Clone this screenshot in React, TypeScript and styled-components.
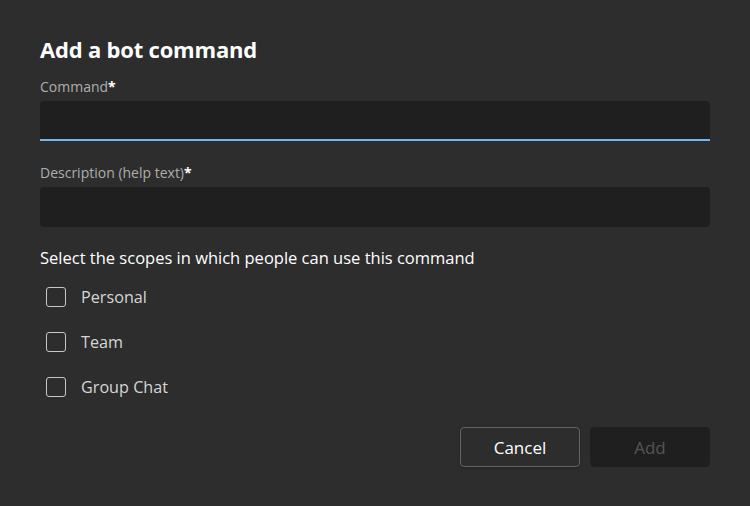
import React from "react";
import styled, { createGlobalStyle } from "styled-components";

const Global = createGlobalStyle`
  html, body { margin: 0; padding: 0; background: #2d2d2d; }
  body { font-family: "Segoe UI", "Open Sans", "Noto Sans", sans-serif; }
`;

const Dialog = styled.div`
  width: 750px;
  height: 506px;
  box-sizing: border-box;
  padding: 34px 40px 0 40px;
  background: #2d2d2d;
  display: flex;
  flex-direction: column;
`;

const Title = styled.h1`
  margin: 0;
  font-family: "Open Sans", sans-serif;
  font-weight: 700;
  font-size: 22px;
  line-height: 30px;
  color: #ffffff;
  letter-spacing: -0.2px;
`;

const Field = styled.div<{ $top: number }>`
  display: flex;
  flex-direction: column;
  margin-top: ${(p) => p.$top}px;
`;

const Label = styled.label`
  font-family: "Open Sans", sans-serif;
  font-size: 14px;
  line-height: 20px;
  color: #adadad;
  margin-bottom: 4px;
`;

const Star = styled.span`
  color: #ffffff;
  font-weight: 700;
`;

const Input = styled.div<{ $focused?: boolean }>`
  height: 40px;
  box-sizing: border-box;
  background: #1f1f1f;
  border-radius: 4px;
  border-bottom: 2px solid ${(p) => (p.$focused ? "#73b6ee" : "transparent")};
  ${(p) => (p.$focused ? "border-bottom-left-radius: 0; border-bottom-right-radius: 0;" : "")}
`;

const ScopeHeading = styled.div`
  margin-top: 20px;
  font-family: "Open Sans", sans-serif;
  font-size: 16.5px;
  line-height: 22px;
  color: #ffffff;
`;

const Options = styled.div`
  display: flex;
  flex-direction: column;
  gap: 25px;
  margin-top: 18px;
  padding-left: 6px;
`;

const Option = styled.div`
  display: flex;
  align-items: center;
  gap: 15px;
  height: 20px;
`;

const Box = styled.span`
  width: 20px;
  height: 20px;
  box-sizing: border-box;
  border: 1.5px solid #c8c8c8;
  border-radius: 3px;
`;

const OptionText = styled.span`
  font-family: "Open Sans", sans-serif;
  font-size: 16.2px;
  color: #d6d6d6;
`;

const Footer = styled.div`
  margin-top: 30px;
  display: flex;
  justify-content: flex-end;
  gap: 10px;
`;

const Button = styled.button<{ $disabled?: boolean }>`
  width: 120px;
  height: 40px;
  box-sizing: border-box;
  border-radius: 4px;
  font-family: "Open Sans", sans-serif;
  font-size: 17px;
  padding: 0;
  background: ${(p) => (p.$disabled ? "#1f1f1f" : "#2d2d2d")};
  color: ${(p) => (p.$disabled ? "#555555" : "#ffffff")};
  border: 1px solid ${(p) => (p.$disabled ? "#1f1f1f" : "#636363")};
  font-weight: ${(p) => (p.$disabled ? 400 : 500)};
  box-shadow: ${(p) => (p.$disabled ? "none" : "0 1px 3px rgba(0,0,0,0.25)")};
`;

export default function App() {
  return (
    <>
      <Global />
      <Dialog>
        <Title>Add a bot command</Title>
        <Field $top={13}>
          <Label>
            Command<Star>*</Star>
          </Label>
          <Input $focused />
        </Field>
        <Field $top={22}>
          <Label>
            Description (help text)<Star>*</Star>
          </Label>
          <Input />
        </Field>
        <ScopeHeading>Select the scopes in which people can use this command</ScopeHeading>
        <Options>
          {["Personal", "Team", "Group Chat"].map((o) => (
            <Option key={o}>
              <Box />
              <OptionText>{o}</OptionText>
            </Option>
          ))}
        </Options>
        <Footer>
          <Button>Cancel</Button>
          <Button $disabled>Add</Button>
        </Footer>
      </Dialog>
    </>
  );
}
